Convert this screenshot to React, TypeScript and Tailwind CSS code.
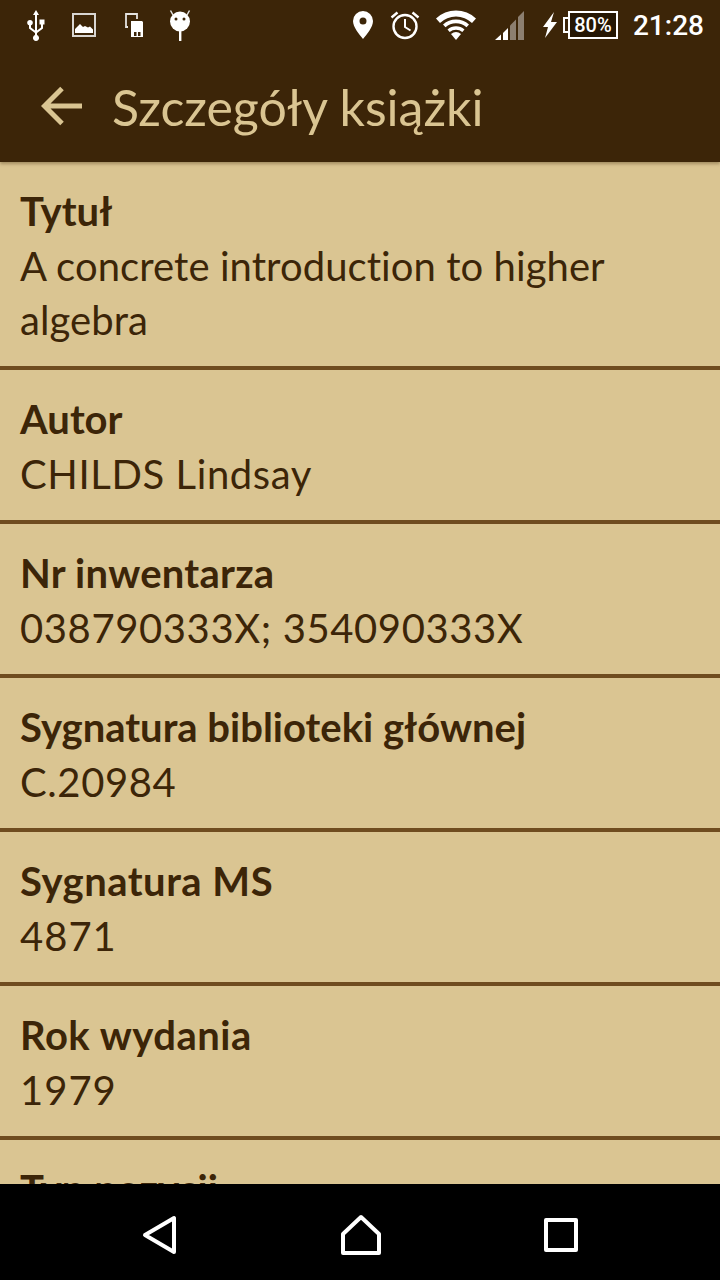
import React from "react";

const rows: { label: string; labelCls: string; valueCls: string; value: string[] }[] = [
  { label: "Tytuł", labelCls: "", valueCls: "tracking-[0.07px]", value: ["A concrete introduction to higher", "algebra"] },
  { label: "Autor", labelCls: "", valueCls: "tracking-[0.6px]", value: ["CHILDS Lindsay"] },
  { label: "Nr inwentarza", labelCls: "tracking-[0.25px]", valueCls: "tracking-[0.6px]", value: ["038790333X; 354090333X"] },
  { label: "Sygnatura biblioteki głównej", labelCls: "", valueCls: "tracking-[0.6px]", value: ["C.20984"] },
  { label: "Sygnatura MS", labelCls: "tracking-[0.5px]", valueCls: "tracking-[1px]", value: ["4871"] },
  { label: "Rok wydania", labelCls: "tracking-[0.5px]", valueCls: "tracking-[1px]", value: ["1979"] },
  { label: "Typ pozycji", labelCls: "", valueCls: "", value: ["Książka"] },
];

function StatusLeft() {
  return (
    <div className="flex items-center">
      <svg width="24" height="32" viewBox="0 0 24 32" className="ml-[24px]" fill="#fff">
        <path d="M12 1l3 5h-2v15.500l4-3v-3h-1.500v-5h5v5H19v4l-6 4.500v2.100a3 3 0 1 1-2 0V24l-6-4.500v-3.200a2.800 2.800 0 1 1 2 0v2.300l4 3V6H9z" />
      </svg>
      <svg width="24" height="24" viewBox="0 0 24 24" className="ml-[24px]" fill="none">
        <rect x="1" y="1" width="22" height="22" stroke="#d9d6d2" strokeWidth="2" />
        <path d="M3 20v-4l5-5 3 3 2-1 3 1.500 2-1 3 3V20z" fill="#fff" />
      </svg>
      <svg width="20" height="26" viewBox="0 0 20 26" className="ml-[28px]" fill="none">
        <path d="M4 15H2V2h11v5" stroke="#e5e3e0" strokeWidth="1.800" />
        <path d="M7 9h11l1 1v15H7z" fill="#fff" />
        <path d="M10 20h2.500v4H10zM14 20h2.500v4H14z" fill="#3c2508" />
      </svg>
      <svg width="24" height="32" viewBox="0 0 24 32" className="ml-[24px]" fill="#fff">
        <circle cx="12" cy="12.500" r="10" />
        <path d="M5 6L2.500 1.500M19 6l2.500-4.500" stroke="#e5e3e0" strokeWidth="1.500" />
        <rect x="11" y="22" width="2.400" height="10" />
        <circle cx="8" cy="10" r="1.500" fill="#3c2508" />
        <circle cx="16" cy="10" r="1.500" fill="#3c2508" />
      </svg>
    </div>
  );
}

function StatusRight() {
  return (
    <div className="flex items-center">
      <svg width="20" height="28" viewBox="0 0 20 28" fill="#fff">
        <path fillRule="evenodd" d="M10 0a10 10 0 0 1 10 10c0 6-6 13-10 18C6 23 0 16 0 10A10 10 0 0 1 10 0zm0 6.500a3.500 3.500 0 1 0 0 7 3.500 3.500 0 0 0 0-7z" />
      </svg>
      <svg width="30" height="30" viewBox="0 0 30 30" className="ml-[17px]" fill="none" stroke="#fff">
        <circle cx="15" cy="16.500" r="11.500" strokeWidth="2.400" />
        <path d="M15 9v8l5.500 3.500" strokeWidth="2" />
        <path d="M1.500 7.500l6-5M28.500 7.500l-6-5" strokeWidth="2.400" />
      </svg>
      <svg width="40" height="32" viewBox="0 0 40 32" className="ml-[16px]" fill="#fff">
        <path d="M20 31l-5-6a8 8 0 0 1 10 0z" />
        <path d="M11.500 20.500a13 13 0 0 1 17 0l-2.200 2.500a10 10 0 0 0-12.600 0z" />
        <path d="M7 15.500a19.500 19.500 0 0 1 26 0l-2.500 2.800a15.500 15.500 0 0 0-21 0z" />
        <path d="M0 9.500a29 29 0 0 1 40 0l-4 4.500a23 23 0 0 0-32 0z" />
      </svg>
      <svg width="30" height="30" viewBox="0 0 30 30" className="ml-[19px]">
        <path d="M0 30l6-5.500V30z" fill="#fff" />
        <path d="M8 30v-7l5-5v12z" fill="#fff" />
        <path d="M15 30V15.500l6-6V30z" fill="#8c7f70" />
        <path d="M23 30V7l6-6v29z" fill="#8c7f70" />
      </svg>
      <svg width="16" height="26" viewBox="0 0 16 26" className="ml-[17px]" fill="#fff">
        <path d="M12 0L1 15h5L3 26l12-16H9z" />
      </svg>
      <div className="ml-[5px] flex items-center">
        <div className="w-[5px] h-[16px] border-2 border-r-0 border-white" />
        <div className="w-[50px] h-[28px] border-2 border-white bg-[#261703] flex items-center justify-center text-white text-[20px] leading-none font-['Roboto',sans-serif] font-medium">
          80%
        </div>
      </div>
      <div className="ml-[15px] mr-[16px] pt-[2px] text-white text-[28px] leading-none font-['Roboto',sans-serif] font-medium">21:28</div>
    </div>
  );
}

export default function App() {
  return (
    <div className="w-[720px] h-[1280px] flex flex-col overflow-hidden bg-[#dac592] font-['Lato','Noto_Sans',sans-serif]">
      <header className="relative z-10 h-[162px] shrink-0 bg-[#3c2508] shadow-[0_2px_3px_rgba(60,37,8,0.35)]">
        <div className="h-[50px] flex items-center justify-between">
          <StatusLeft />
          <StatusRight />
        </div>
        <div className="h-[112px] flex items-center">
          <svg width="42" height="42" viewBox="0 0 42 42" className="ml-[41px]" fill="none" stroke="#dac592" strokeWidth="5">
            <path d="M41 21H4M21 3.500L3.500 21 21 38.500" />
          </svg>
          <div className="ml-[29px] pt-[2px] text-[#dac592] text-[50px] leading-none">Szczegóły książki</div>
        </div>
      </header>
      <main className="flex-1 min-h-0 overflow-hidden text-[#3c2508]">
        {rows.map((r) => (
          <div key={r.label} className="px-[20px] pt-[21px] pb-[19px] border-b-4 border-[#6f4c1f]">
            <div className={`text-[40px] leading-[56px] font-bold ${r.labelCls}`}>{r.label}</div>
            {r.value.map((v) => (
              <div key={v} className={`text-[40px] leading-[54px] ${r.valueCls}`}>{v}</div>
            ))}
          </div>
        ))}
      </main>
      <nav className="h-[96px] shrink-0 bg-black flex items-center pt-[6px]">
        <svg width="36" height="40" viewBox="0 0 36 40" className="ml-[142px]" fill="none" stroke="#fff" strokeWidth="4" strokeLinejoin="round">
          <path d="M32 3v34L3 20z" />
        </svg>
        <svg width="42" height="42" viewBox="0 0 42 42" className="ml-[162px]" fill="none" stroke="#fff" strokeWidth="4" strokeLinejoin="round">
          <path d="M21 3L39 20v19H3V20z" />
        </svg>
        <svg width="36" height="36" viewBox="0 0 36 36" className="ml-[161px]" fill="none" stroke="#fff" strokeWidth="4" strokeLinejoin="round">
          <rect x="3" y="3" width="30" height="30" />
        </svg>
      </nav>
    </div>
  );
}
